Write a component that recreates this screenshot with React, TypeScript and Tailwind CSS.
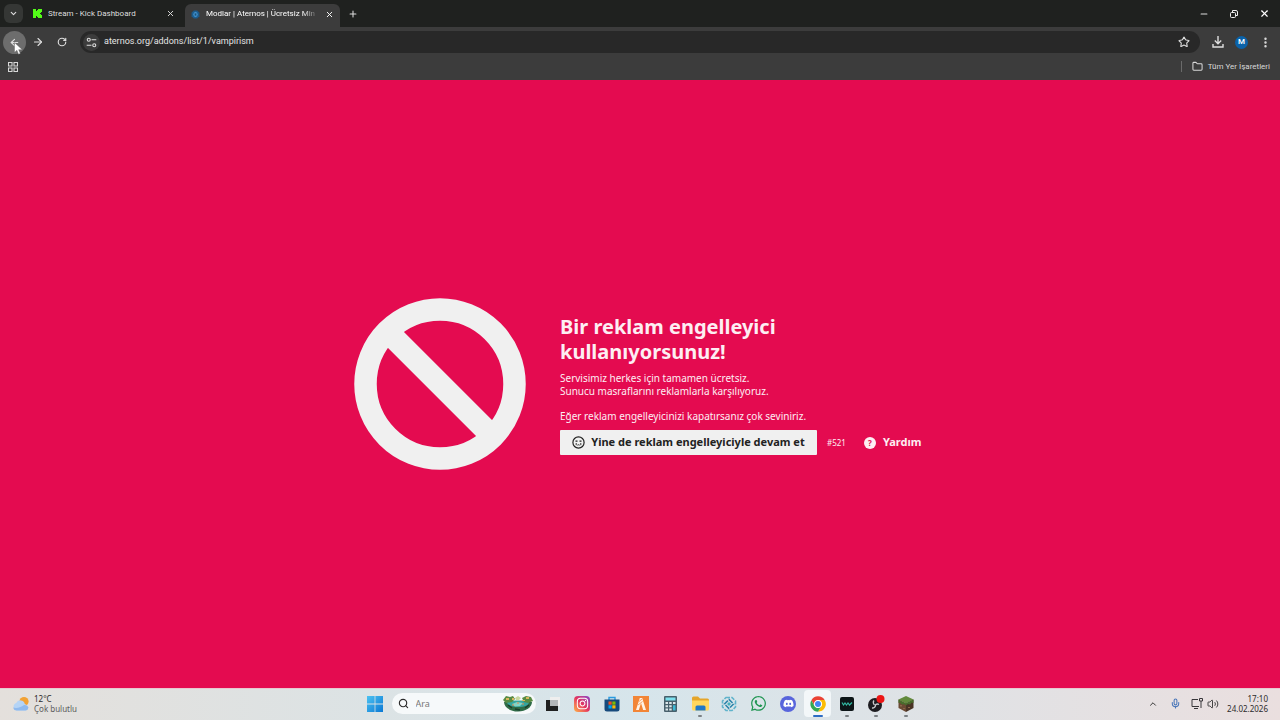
import { useState } from 'react';
import type { ReactNode } from 'react';
import { ArrowRight, ArrowLeft, ChevronDown, ChevronUp, Folder, Mic, Minus, MoreVertical, Plus, RotateCw, Search, Star, Volume2, X } from 'lucide-react';
import { FaInstagram, FaWhatsapp, FaDiscord } from 'react-icons/fa';

const PAGE_FONT = "font-['Noto_Sans','Liberation_Sans',sans-serif]";
const BROWSER_FONT = "font-[Roboto,'Liberation_Sans',sans-serif]";

function KickLogo() {
  return (
    <svg viewBox="0 0 9 9" className="size-[9px] shrink-0" fill="#53fc18" shapeRendering="crispEdges" aria-hidden="true">
      <path d="M0 0h3v2h1V1h1V0h4v3H8v1H7v1h1v1h1v3H5V8H4V7H3v2H0z" />
    </svg>
  );
}

function AternosLogo() {
  return (
    <svg viewBox="0 0 16 16" className="size-[9px] shrink-0" aria-hidden="true">
      <path d="M5 1h6l4 4v6l-4 4H5l-4-4V5z" fill="#1c5b8c" />
      <path d="M5 5l3-2 3 2 1 3-1 3-3 2-3-2-1-3z" fill="#3f8fca" />
      <path d="M6.500 6h3v4h-3z" fill="#1d5178" />
    </svg>
  );
}

function TuneIcon() {
  return (
    <svg viewBox="0 0 16 16" className="size-[11px]" fill="none" stroke="#dedede" strokeWidth="1.6" aria-hidden="true">
      <circle cx="4" cy="4" r="2.2" />
      <path d="M8 4h7M1 12h7" />
      <circle cx="12" cy="12" r="2.2" />
    </svg>
  );
}

function AppsIcon() {
  return (
    <svg viewBox="0 0 10 10" className="size-[10px]" fill="none" stroke="#d8d8d8" strokeWidth="1.1" aria-hidden="true">
      <path d="M.5.5h3.500v3.500H.5zM6 .5h3.500v3.500H6zM.5 6h3.500v3.500H.5zM6 6h3.500v3.500H6z" />
    </svg>
  );
}

function DownloadIcon() {
  return (
    <svg viewBox="0 0 12 12" className="size-3" fill="none" stroke="#dedede" strokeWidth="1.4" aria-hidden="true">
      <path d="M6 0v7.5M2.8 4.6L6 7.8l3.2-3.2M1 8v3h10V8" />
    </svg>
  );
}

function RestoreIcon() {
  return (
    <svg viewBox="0 0 8 8" className="size-2" fill="none" stroke="#efefef" strokeWidth="1" aria-hidden="true">
      <rect x=".5" y="2.5" width="5" height="5" rx="1" />
      <path d="M2.5 2V.5H6A1.5 1.5 0 0 1 7.5 2v3.5H6" />
    </svg>
  );
}

function CursorIcon() {
  return (
    <svg viewBox="0 0 9 13" className="pointer-events-none absolute top-[11px] left-[11px] z-10 h-[13px] w-[9px]" aria-hidden="true">
      <path d="M.5.5v10l2.4-2.2 1.6 4 1.8-.8-1.6-3.8h3.6z" fill="#fff" stroke="#555" strokeWidth=".4" />
    </svg>
  );
}

function BanIcon() {
  return (
    <svg viewBox="0 0 172 172" className="size-[172px] shrink-0" fill="none" stroke="#f0f0f0" strokeWidth="22.5" aria-hidden="true">
      <circle cx="86" cy="86" r="74.5" />
      <path d="M34 34l104 104" />
    </svg>
  );
}

function CryingFace() {
  return (
    <svg viewBox="0 0 13 13" className="size-[13px]" fill="none" stroke="#222222" strokeWidth="1.2" aria-hidden="true">
      <circle cx="6.500" cy="6.500" r="5.600" />
      <path d="M3.500 5.200h2M7.500 5.200h2" />
      <path d="M4.200 7v2.200M8.800 7v2.200" strokeWidth=".9" />
      <path d="M5.400 9.200c.6-.6 1.600-.6 2.200 0" strokeWidth="1" />
    </svg>
  );
}

function WeatherIcon() {
  return (
    <svg viewBox="0 0 18 16" className="h-4 w-[18px]" aria-hidden="true">
      <circle cx="12" cy="5.5" r="4.6" fill="#f2a234" />
      <path d="M4.5 14.5a4 4 0 0 1-.3-7.6 4.6 4.6 0 0 1 8.6 1 3.4 3.4 0 0 1 .7 6.6z" fill="#b5d4f5" />
      <path d="M4.5 14.5A3.9 3.9 0 0 1 1 11.5c4 1.2 8-.2 11-2.5a4 4 0 0 1 4.5 2.6 3.3 3.3 0 0 1-3 2.9z" fill="#8fbaee" />
    </svg>
  );
}

function WindowsLogo() {
  return (
    <svg viewBox="0 0 16 16" className="size-4" aria-hidden="true">
      <defs>
        <linearGradient id="win" x1="0" y1="0" x2="1" y2="1">
          <stop offset="0" stopColor="#4cc2f1" />
          <stop offset="1" stopColor="#0a78d4" />
        </linearGradient>
      </defs>
      <path d="M0 0h7.6v7.6H0zM8.4 0H16v7.6H8.4zM0 8.4h7.6V16H0zM8.4 8.4H16V16H8.4z" fill="url(#win)" />
    </svg>
  );
}

function LagoonArt() {
  return (
    <svg viewBox="0 0 30 17" className="h-[17px] w-[30px]" aria-hidden="true">
      <path d="M1 7c0 5 6 9.500 14 9.500S29 12 29 7z" fill="#2f6b46" />
      <path d="M4 7c3-2 19-2 22 0 0 3-4 5-11 5S4 10 4 7z" fill="#35a5a0" />
      <path d="M9 9l5-2 6 1-3 3-5 .5z" fill="#83d3c5" />
      <path d="M0 5l3-4 4 1 3-1 2 3-3 3-6 1zM19 3l4-2 5 1 2 4-5 2-4-1z" fill="#588b43" />
      <path d="M3 3h3v2H3zM23 2h3v2h-3zM9 3h2v2H9zM19 5h3v1h-3z" fill="#d9b65c" />
      <path d="M12 3l3-2 3 2-2 2h-3z" fill="#c9d9a0" />
      <path d="M5 10l4 3M22 13l4-3M12 14l5 1" stroke="#183f2e" strokeWidth="1.4" />
      <path d="M14 8h2M19 9h2M9 10h2" stroke="#e2884c" strokeWidth="1" />
    </svg>
  );
}

function TaskViewIcon() {
  return (
    <svg viewBox="0 0 14 14" className="size-[14px]" aria-hidden="true">
      <path d="M4 0h10v9H4z" fill="#eeeeee" />
      <path d="M0 3h12v11H0z" fill="#202020" />
      <path d="M4 3h8v6H4z" fill="#b4b7b9" />
    </svg>
  );
}

function StoreIcon() {
  return (
    <svg viewBox="0 0 16 16" className="size-4" aria-hidden="true">
      <path d="M5 4V1.500h6V4" fill="none" stroke="#2a9be0" strokeWidth="1.4" />
      <path d="M.5 3.500h15V13a2.500 2.500 0 0 1-2.500 2.500H3A2.500 2.500 0 0 1 .5 13z" fill="#164a7c" />
      <path d="M4.500 5.500h3.200v3.200H4.500z" fill="#f25022" />
      <path d="M8.300 5.500h3.200v3.200H8.300z" fill="#7fba00" />
      <path d="M4.500 9.300h3.200v3.200H4.500z" fill="#00a4ef" />
      <path d="M8.300 9.300h3.200v3.200H8.300z" fill="#ffb900" />
    </svg>
  );
}

function FiveMIcon() {
  return (
    <svg viewBox="0 0 16 16" className="size-4" aria-hidden="true">
      <path d="M0 0h16v16H0z" fill="#f28536" />
      <path d="M6.800 2h2.400L13 14h-2.800L8 7l-2.200 7H3z" fill="#fff3e6" />
      <path d="M6 5.500L9 3M5 9l4.500-3.500" stroke="#f28536" strokeWidth=".7" />
    </svg>
  );
}

function CalculatorIcon() {
  return (
    <svg viewBox="0 0 13 16" className="h-4 w-[13px]" aria-hidden="true">
      <rect width="13" height="16" rx="1" fill="#48606c" />
      <path d="M1.500 1.500h10v3h-10z" fill="#7ce0ee" />
      <path d="M1.500 6h2.500v2H1.500zM5.200 6h2.500v2H5.200zM1.500 9.200h2.500v2H1.500zM5.200 9.200h2.500v2H5.200zM1.500 12.400h2.500v2H1.500zM5.200 12.400h2.500v2H5.200zM9 6h2.500v2H9z" fill="#dce7ea" />
      <path d="M9 9.200h2.500v5.200H9z" fill="#3db8d4" />
    </svg>
  );
}

function ExplorerIcon() {
  return (
    <svg viewBox="0 0 17 15" className="h-[15px] w-[17px]" aria-hidden="true">
      <path d="M0 2a1.500 1.500 0 0 1 1.500-1.500H6l2 2H15.500A1.500 1.500 0 0 1 17 4v3H0z" fill="#e5a52b" />
      <path d="M0 4.500h17v8.500a1.500 1.500 0 0 1-1.500 1.500h-14A1.500 1.500 0 0 1 0 13z" fill="#ffd75e" />
      <path d="M3.500 14.500V11a1.500 1.500 0 0 1 1.500-1.500h7a1.500 1.500 0 0 1 1.500 1.500v3.500z" fill="#1f78c8" />
    </svg>
  );
}

function LauncherIcon() {
  return (
    <svg viewBox="0 0 16 16" className="size-4" fill="none" aria-hidden="true">
      <path d="M5 1.500h6L14.500 5v6L11 14.500H5L1.500 11V5z" stroke="#5fb3cb" strokeWidth="1.600" strokeDasharray="4 1.200" />
      <path d="M8 3.500L12.500 8 8 12.500 3.500 8z" stroke="#2f86ac" strokeWidth="1.600" strokeDasharray="5 1.300" />
      <path d="M8 6l2 2-2 2-2-2z" fill="#44b1bd" />
    </svg>
  );
}

function ChromeIcon() {
  return (
    <svg viewBox="0 0 48 48" className="size-4" aria-hidden="true">
      <circle cx="24" cy="24" r="23" fill="#fff" />
      <path d="M24 12h20A23 23 0 0 0 4.100 12.500L14 30a12 12 0 0 1 10-18z" fill="#ea4335" />
      <path d="M34.400 30L24 47A23 23 0 0 0 44 12H24a12 12 0 0 1 10.400 18z" fill="#fbbc05" />
      <path d="M13.600 30L4.100 12.500A23 23 0 0 0 24 47l10.400-17a12 12 0 0 1-20.800 0z" fill="#34a853" />
      <circle cx="24" cy="24" r="11.500" fill="#fff" />
      <circle cx="24" cy="24" r="9" fill="#4285f4" />
    </svg>
  );
}

function WaveIcon() {
  return (
    <svg viewBox="0 0 14 14" className="size-[14px]" aria-hidden="true">
      <rect width="14" height="14" rx="2" fill="#0d1517" />
      <path d="M2 5.500l1.500 2.500 1.500-2 1.500 2 1.500-2 1.500 2L12 5.500" fill="none" stroke="#32b8a2" strokeWidth="1.200" />
    </svg>
  );
}

function ObsIcon() {
  return (
    <svg viewBox="0 0 18 18" className="size-[18px]" aria-hidden="true">
      <circle cx="8" cy="10" r="7" fill="#1d1c20" />
      <path d="M7 5.500a3 3 0 0 0 .5 4.300M12 9.500a3 3 0 0 0-4 1M5 13a3 3 0 0 0 3.500-2.500" fill="none" stroke="#c9c9cc" strokeWidth="1.400" />
      <circle cx="13.500" cy="4" r="4" fill="#ec1515" />
    </svg>
  );
}

function GrassBlockIcon() {
  return (
    <svg viewBox="0 0 16 16" className="size-4" aria-hidden="true">
      <path d="M8 0l7.500 3.500L8 7.500.5 3.500z" fill="#628a3c" />
      <path d="M.5 3.500L8 7.500V16L.5 12z" fill="#6b4a34" />
      <path d="M15.500 3.500L8 7.500V16l7.500-4z" fill="#4a3325" />
      <path d="M.5 3.500L8 7.500v2L6 8 4 8.500 2 6.500.5 7zM15.500 3.500L8 7.500v2L10 8l2 .5 1.500-2 2 .5z" fill="#476d2b" />
      <path d="M2 9h2v1.500H2zM5 12h2v1H5zM10 11h2v1h-2z" fill="#8c6648" />
    </svg>
  );
}

function MonitorIcon() {
  return (
    <svg viewBox="0 0 12 12" className="size-3" fill="none" stroke="#38363a" aria-hidden="true">
      <path d="M7 1.500H1v7h7M3 10.500h4" />
      <path d="M10 3v7M8.500.5h3v2.500h-3z" />
    </svg>
  );
}

interface TaskbarApp {
  name: string;
  icon: ReactNode;
  running?: boolean;
  active?: boolean;
}

const APPS: TaskbarApp[] = [
  { name: 'Görev görünümü', icon: <TaskViewIcon /> },
  {
    name: 'Instagram',
    icon: (
      <span className="grid size-4 place-items-center rounded bg-linear-to-tr from-[#fdb03f] via-[#e4325f] to-[#8a3ac8] text-white">
        <FaInstagram size={13} />
      </span>
    ),
  },
  { name: 'Microsoft Store', icon: <StoreIcon /> },
  { name: 'FiveM', icon: <FiveMIcon /> },
  { name: 'Hesap Makinesi', icon: <CalculatorIcon /> },
  { name: 'Dosya Gezgini', icon: <ExplorerIcon />, running: true },
  { name: 'Launcher', icon: <LauncherIcon /> },
  { name: 'WhatsApp', icon: <FaWhatsapp size={17} color="#219653" /> },
  {
    name: 'Discord',
    icon: (
      <span className="grid size-4 place-items-center rounded-full bg-[#5865dc] text-white">
        <FaDiscord size={11} />
      </span>
    ),
  },
  { name: 'Google Chrome', icon: <ChromeIcon />, active: true },
  { name: 'Wave', icon: <WaveIcon />, running: true },
  { name: 'OBS Studio', icon: <ObsIcon />, running: true },
  { name: 'Minecraft', icon: <GrassBlockIcon />, running: true },
];

function TabStrip() {
  return (
    <div className="flex h-[27px] items-center bg-[#1f211f] text-[8px] text-[#dedede]">
      <button aria-label="Sekmelerde ara" className="ml-1 grid size-[19px] place-items-center rounded-md bg-[#353735]">
        <ChevronDown size={9} strokeWidth={3} />
      </button>
      <div className="ml-[10px] flex w-[142px] items-center gap-[6px]">
        <KickLogo />
        <span className="grow truncate">Stream - Kick Dashboard</span>
        <button aria-label="Sekmeyi kapat">
          <X size={9} strokeWidth={2.5} />
        </button>
      </div>
      <div className="ml-[10px] flex h-[23px] w-[155px] items-center gap-[6px] self-end rounded-t-md bg-[#3c3c3c] px-[6px] pb-[3px] text-white">
        <AternosLogo />
        <span className="grow mask-r-from-85% whitespace-nowrap">Modlar | Aternos | Ücretsiz Min</span>
        <button aria-label="Sekmeyi kapat">
          <X size={9} strokeWidth={2.5} />
        </button>
      </div>
      <button aria-label="Yeni sekme" className="ml-2">
        <Plus size={10} strokeWidth={2.5} />
      </button>
      <div className="mr-[10px] ml-auto flex items-center gap-[21px]">
        <button aria-label="Simge durumuna küçült">
          <Minus size={10} strokeWidth={2.5} />
        </button>
        <button aria-label="Geri yükle">
          <RestoreIcon />
        </button>
        <button aria-label="Kapat" className="text-white">
          <X size={11} strokeWidth={2.5} />
        </button>
      </div>
    </div>
  );
}

function Toolbar() {
  const [url, setUrl] = useState('aternos.org/addons/list/1/vampirism');

  return (
    <div className="flex h-[30px] items-center bg-[#3c3c3c] text-[#dedede]">
      <div className="relative ml-[3px]">
        <button aria-label="Geri" className="grid size-[23px] place-items-center rounded-full bg-[#6d6d6d]">
          <ArrowLeft size={11} strokeWidth={2.5} />
        </button>
        <CursorIcon />
      </div>
      <button aria-label="İleri" className="ml-[6px]">
        <ArrowRight size={12} strokeWidth={2.25} />
      </button>
      <button aria-label="Yenile" className="ml-[13px]">
        <RotateCw size={10} strokeWidth={2.75} />
      </button>
      <div className="ml-[13px] flex h-[22px] grow items-center rounded-full bg-[#282828] pr-[10px] pl-[3px]">
        <button aria-label="Site bilgileri" className="grid size-[17px] place-items-center rounded-full bg-[#3c3c3c]">
          <TuneIcon />
        </button>
        <input
          aria-label="Adres çubuğu"
          value={url}
          onChange={(e) => setUrl(e.target.value)}
          className="ml-1 grow bg-transparent text-[9px] text-[#e4e4e4] outline-none"
        />
        <button aria-label="Yer işareti ekle">
          <Star size={12} strokeWidth={2.25} />
        </button>
      </div>
      <div className="mr-2 ml-3 flex items-center gap-[11px]">
        <button aria-label="İndirilenler">
          <DownloadIcon />
        </button>
        <button aria-label="Profil" className="grid size-[13px] place-items-center rounded-full bg-[#0b62a8] text-[8px] leading-none font-medium text-white">
          M
        </button>
        <button aria-label="Menü">
          <MoreVertical size={13} strokeWidth={2.5} />
        </button>
      </div>
    </div>
  );
}

function BookmarksBar() {
  return (
    <div className="flex h-[23px] items-center justify-between bg-[#3c3c3c] pr-[10px] pb-1 pl-2 text-[#d8d8d8]">
      <button aria-label="Uygulamalar">
        <AppsIcon />
      </button>
      <div className="flex items-center">
        <span className="h-[11px] w-px bg-[#6a6a6a]" />
        <button className="ml-[10px] flex items-center gap-[5px] text-[8px]">
          <Folder size={11} strokeWidth={2.25} />
          Tüm Yer İşaretleri
        </button>
      </div>
    </div>
  );
}

function AdblockNotice() {
  return (
    <main className="flex grow items-center justify-center gap-[34px] bg-[#e40b50] text-[#fdeef3]">
      <BanIcon />
      <div className="w-[366px] pt-px">
        <h1 className="text-[20px] leading-[25px] font-bold">
          Bir reklam engelleyici
          <br />
          kullanıyorsunuz!
        </h1>
        <p className="mt-2 text-[10px] leading-[13px]">
          Servisimiz herkes için tamamen ücretsiz.
          <br />
          Sunucu masraflarını reklamlarla karşılıyoruz.
        </p>
        <p className="mt-3 text-[10px] leading-[13px]">Eğer reklam engelleyicinizi kapatırsanız çok seviniriz.</p>
        <div className="mt-[7px] flex items-center whitespace-nowrap">
          <button className="flex h-[25px] w-[257px] shrink-0 items-center justify-center gap-[6px] rounded-[1px] bg-[#f0f0f0] text-[11px] font-bold text-[#222222]">
            <CryingFace />
            Yine de reklam engelleyiciyle devam et
          </button>
          <span className="ml-[10px] text-[8px]">#521</span>
          <a href="#yardim" className="ml-[18px] flex items-center gap-[7px] text-[11px] font-bold">
            <span className="grid size-3 place-items-center rounded-full bg-[#fdeef3] text-[8px] leading-none text-[#e40b50]">?</span>
            Yardım
          </a>
        </div>
      </div>
    </main>
  );
}

function Taskbar() {
  return (
    <footer className="grid h-8 grid-cols-[1fr_auto_1fr] items-center border-t border-[#e8c8d0] bg-linear-to-r from-[#e4e0dc] via-[#d6e5eb] to-[#eadfdf] pb-[2px] text-[8px] leading-[10px] text-[#2c2c2c]">
      <button className="ml-3 flex items-center gap-1 justify-self-start text-left">
        <WeatherIcon />
        <span>
          12°C
          <br />
          <span className="text-[#5c5c5c]">Çok bulutlu</span>
        </span>
      </button>
      <div className="flex items-center pl-[6px]">
        <button aria-label="Başlat" className="mr-[9px]">
          <WindowsLogo />
        </button>
        <label className="mr-1 flex h-[21px] w-36 items-center gap-[7px] rounded-full bg-[#f6f9fa] pr-[3px] pl-[6px]">
          <Search size={11} strokeWidth={2.5} />
          <input aria-label="Ara" placeholder="Ara" className="w-0 grow bg-transparent text-[9px] outline-none placeholder:text-[#777777]" />
          <LagoonArt />
        </label>
        <div className="flex w-[380px] justify-between">
          {APPS.map((app) => (
            <button
              key={app.name}
              aria-label={app.name}
              className={`relative grid h-[27px] w-[27px] place-items-center rounded ${app.active ? 'bg-[#f3f7f9]' : ''}`}
            >
              {app.icon}
              {app.active && <span className="absolute bottom-0 h-[2px] w-[10px] rounded-full bg-[#2d6cc4]" />}
              {app.running && <span className="absolute bottom-0 h-[2px] w-1 rounded-full bg-[#7b8084]" />}
            </button>
          ))}
        </div>
      </div>
      <div className="mr-3 flex items-center justify-self-end">
        <button aria-label="Gizli simgeler">
          <ChevronUp size={10} strokeWidth={2.25} />
        </button>
        <Mic size={11} strokeWidth={2.25} className="ml-3 text-[#4774b8]" />
        <button aria-label="Ağ ve ses" className="ml-[10px] flex items-center gap-1">
          <MonitorIcon />
          <Volume2 size={12} strokeWidth={1.75} />
        </button>
        <button className="ml-2 text-right">
          17:10
          <br />
          24.02.2026
        </button>
      </div>
    </footer>
  );
}

export default function App() {
  return (
    <div className={`flex min-h-screen flex-col ${PAGE_FONT}`}>
      <header className={BROWSER_FONT}>
        <TabStrip />
        <Toolbar />
        <BookmarksBar />
      </header>
      <AdblockNotice />
      <Taskbar />
    </div>
  );
}
